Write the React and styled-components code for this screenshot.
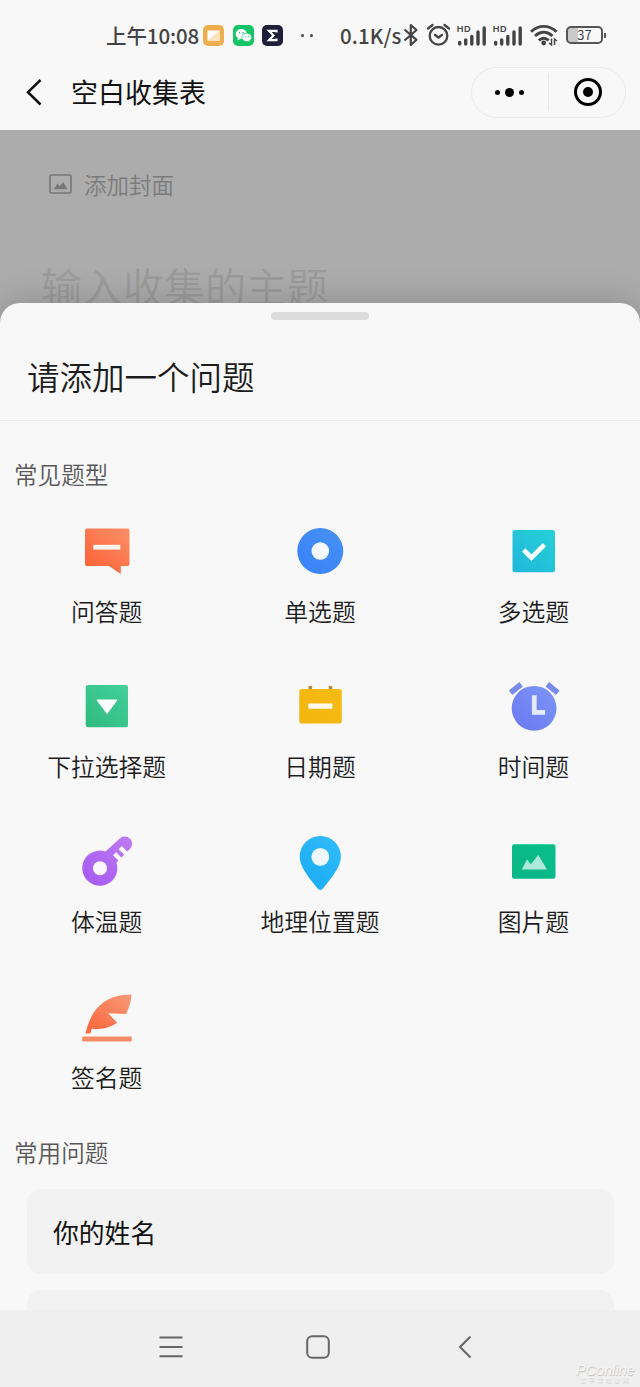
import React from "react";
import styled, { createGlobalStyle } from "styled-components";

const GlobalStyle = createGlobalStyle`
  * {
    box-sizing: border-box;
  }
  body {
    margin: 0;
    background: #f8f8f8;
    font-family: "Noto Sans CJK SC", "Noto Sans", sans-serif;
  }
  svg {
    display: block;
    overflow: visible;
    flex: none;
  }
`;

const QuestionIcon = ({ children, from, to, id }) => (
  <svg width="56" height="56" viewBox="0 0 56 56">
    <defs>
      <linearGradient id={id} x1="1" y1="0" x2="0.2" y2="1">
        <stop offset="0" stopColor={from} />
        <stop offset="1" stopColor={to} />
      </linearGradient>
    </defs>
    {children}
  </svg>
);

const TextIcon = () => (
  <QuestionIcon id="text" from="#fb9068" to="#fb6236">
    <path
      d="M8 5.500H48.500a2 2 0 0 1 2 2V41a2 2 0 0 1-2 2H41.800V51L30 43H8a2 2 0 0 1-2-2V7.500a2 2 0 0 1 2-2Z"
      fill="url(#text)"
    />
    <rect x="14.300" y="21.800" width="27" height="4.800" fill="#fff5f0" />
  </QuestionIcon>
);

const RadioIcon = () => (
  <QuestionIcon id="radio" from="#4692f0" to="#3a82fb">
    <circle cx="28.300" cy="28" r="23" fill="url(#radio)" />
    <circle cx="28.300" cy="28" r="8.800" fill="#f4f8ff" />
  </QuestionIcon>
);

const CheckIcon = () => (
  <QuestionIcon id="check" from="#25d0d8" to="#22b9da">
    <rect x="7.500" y="7" width="42.500" height="42.200" rx="2.500" fill="url(#check)" />
    <path d="M18.700 27l7.700 7.700L39.500 21.600" fill="none" stroke="#f4ffff" strokeWidth="4.600" />
  </QuestionIcon>
);

const SelectIcon = () => (
  <QuestionIcon id="select" from="#43cf9b" to="#31bd80">
    <rect x="6.700" y="7" width="42.300" height="42.200" rx="2.500" fill="url(#select)" />
    <path
      d="M18 22H38L28 35.500Z"
      fill="#fff"
      stroke="#fff"
      strokeWidth="1"
      strokeLinejoin="round"
    />
  </QuestionIcon>
);

const DateIcon = () => (
  <QuestionIcon id="date" from="#f5bc16" to="#f3b50c">
    <path d="M18.300 8v4M38.500 8v4" stroke="#bb8a41" strokeWidth="3.600" />
    <rect x="7.300" y="11" width="42.500" height="34.500" rx="2.500" fill="url(#date)" />
    <rect x="16.300" y="25.600" width="24" height="5.200" rx="0.800" fill="#fffbea" />
  </QuestionIcon>
);

const TimeIcon = () => (
  <QuestionIcon id="time" from="#7c97f8" to="#6d7af2">
    <path d="M5.600 14.800l10.500-8.500M52.800 14.800l-10.500-8.500" stroke="#7a8ceb" strokeWidth="5.600" />
    <circle cx="29.100" cy="30.300" r="22.400" fill="url(#time)" />
    <path d="M29.300 17.300V34.300H40.100" fill="none" stroke="#e6ecff" strokeWidth="4.700" />
  </QuestionIcon>
);

const TemperatureIcon = () => (
  <QuestionIcon id="temperature" from="#bd7cf0" to="#a75cf2">
    <path
      d="M40.500 5.800A7.300 7.300 0 1 1 50.600 16.300L37.500 29.500A17.600 17.600 0 1 1 26.500 18.500Z"
      fill="url(#temperature)"
    />
    <circle cx="21" cy="35.300" r="7" fill="#fbf5ff" />
    <path d="M35.600 20.700l8.500 8.500M41.200 14.600l8 8" stroke="#faf6fd" strokeWidth="4.400" />
  </QuestionIcon>
);

const LocationIcon = () => (
  <QuestionIcon id="location" from="#31bdfb" to="#1cabf3">
    <path
      d="M28.300 3A20.600 20.600 0 0 1 48.900 23.600C48.900 35 38 46.500 31 55.600Q28.300 58.400 25.600 55.600C18.600 46.500 7.700 35 7.700 23.600A20.600 20.600 0 0 1 28.300 3Z"
      fill="url(#location)"
    />
    <circle cx="28.300" cy="23.900" r="8.900" fill="#eef8fe" />
  </QuestionIcon>
);

const PictureIcon = () => (
  <QuestionIcon id="picture" from="#0abf8b" to="#0ab685">
    <rect x="7" y="11.200" width="43.500" height="34.600" rx="2.500" fill="url(#picture)" />
    <path d="M16.700 36.500L22.100 26.500L25.700 31.500L33.300 22L42 36.500Z" fill="#aeeadb" />
  </QuestionIcon>
);

const SignIcon = () => (
  <QuestionIcon id="sign" from="#f79a78" to="#fb683c">
    <path
      d="M52.600 5.400C51.800 13 50 19 47 25L29.200 24.300L38.200 33.700C31 38.500 22 41 12.800 39.800L11.300 44.500H6.600C9 33 13.500 24.500 18 19.300C26.500 9.500 38 5.500 52.600 5.400Z"
      fill="url(#sign)"
    />
    <rect x="3.200" y="47.600" width="49.500" height="4.800" rx="0.800" fill="#f88b66" />
  </QuestionIcon>
);

const Signal = () => (
  <svg width="31" height="24" viewBox="0 0 31 24">
    <text x="-0.500" y="8.500" fontSize="9.500" fontWeight="600" fill="#444" fontFamily="Noto Sans">
      HD
    </text>
    <path
      d="M2.700 21v-1.500M8.700 21v-4M14.800 21v-7.500M21 21v-12M27.200 21v-16"
      stroke="#444"
      strokeWidth="3.400"
      strokeLinecap="round"
    />
  </svg>
);

const questionTypes = [
  { name: "问答题", Icon: TextIcon },
  { name: "单选题", Icon: RadioIcon },
  { name: "多选题", Icon: CheckIcon },
  { name: "下拉选择题", Icon: SelectIcon },
  { name: "日期题", Icon: DateIcon },
  { name: "时间题", Icon: TimeIcon },
  { name: "体温题", Icon: TemperatureIcon },
  { name: "地理位置题", Icon: LocationIcon },
  { name: "图片题", Icon: PictureIcon },
  { name: "签名题", Icon: SignIcon },
];

const StatusBar = () => (
  <StyledStatusBar>
    <StatusText $width={97}>上午10:08</StatusText>
    <AppIcons>
      <svg width="21" height="21" viewBox="0 0 21 21">
        <rect width="21" height="21" rx="5" fill="#efae4e" />
        <path d="M4.500 5.500h12.500L4.500 16Z" fill="#fff" />
        <path d="M17 5.500V16H4.500Z" fill="#fbe3bd" />
      </svg>
      <svg width="21" height="21" viewBox="0 0 21 21">
        <rect width="21" height="21" rx="5" fill="#18c468" />
        <path d="M5 13l-.6 2.500L7.500 14ZM15 15l2 1.700-.5-3Z" fill="#fff" />
        <ellipse cx="8.300" cy="9" rx="5.600" ry="4.900" fill="#fff" />
        <ellipse cx="13.700" cy="12.400" rx="4.900" ry="4.200" fill="#fff" stroke="#18c468" strokeWidth="0.700" />
        <g fill="#18c468">
          <circle cx="6.500" cy="7.800" r="0.800" />
          <circle cx="10.300" cy="7.800" r="0.800" />
          <circle cx="12.200" cy="11.300" r="0.650" />
          <circle cx="15.400" cy="11.300" r="0.650" />
        </g>
      </svg>
      <svg width="21" height="21" viewBox="0 0 21 21">
        <rect width="21" height="21" rx="5" fill="#1d2038" />
        <path
          d="M14.500 7.500V5.800H7L11.500 10.500L7 15.200H14.500V13.500"
          fill="none"
          stroke="#fff"
          strokeWidth="2.200"
        />
      </svg>
    </AppIcons>
    <MoreDots>
      <i />
      <i />
    </MoreDots>
    <StatusText $width={63} $spacing="0.1px">
      0.1K/s
    </StatusText>
    <StatusIcons>
      <svg width="16" height="24" viewBox="0 0 16 24">
        <path
          d="M1.500 6.500L13.500 16.800L7.800 22V2L13.500 7L1.500 17.500"
          fill="none"
          stroke="#444"
          strokeWidth="2.200"
          strokeLinejoin="round"
        />
      </svg>
      <svg width="24" height="24" viewBox="0 0 24 24">
        <g fill="none" stroke="#444" strokeWidth="2.300" strokeLinecap="round">
          <circle cx="12.500" cy="12.800" r="8.800" />
          <path d="M2 5.500L6.500 2M23 5.500L18.500 2M9 12l3.500 2.500 3.500-2.500" />
        </g>
      </svg>
      <Signal />
      <Signal />
      <svg width="28" height="24" viewBox="0 0 28 24">
        <g fill="none" stroke="#444" strokeWidth="2.900">
          <path d="M0 8.800C7.500 1.500 18 1.500 25.500 8.800" />
          <path d="M4 13C9.500 7.900 16 7.900 21.500 13" />
          <path d="M7.800 17.300C11 14.500 14.500 14.500 17.700 17.300" />
        </g>
        <circle cx="12.700" cy="20" r="2.400" fill="#444" />
        <path d="M20.500 15.500v6.500l-2.500-2M23.500 22v-6l2.500 2" fill="none" stroke="#444" strokeWidth="1.500" />
      </svg>
    </StatusIcons>
    <Battery>37</Battery>
    <BatteryTip />
  </StyledStatusBar>
);

export default function App() {
  return (
    <Phone>
      <GlobalStyle />
      <StatusBar />
      <NavBar>
        <svg width="16" height="28" viewBox="0 0 16 28">
          <path d="M14.500 2L2 14.200L14.500 26.500" fill="none" stroke="#111" strokeWidth="2.500" />
        </svg>
        <NavTitle>空白收集表</NavTitle>
        <Capsule>
          <CapsuleDots>
            <i />
            <i />
            <i />
          </CapsuleDots>
          <CapsuleClose>
            <i />
          </CapsuleClose>
        </Capsule>
      </NavBar>
      <Content>
        <Backdrop>
          <Cover>
            <svg width="23" height="20" viewBox="0 0 23 20">
              <rect x="1" y="1" width="21" height="18" rx="1" fill="none" stroke="#777" strokeWidth="1.600" />
              <path d="M5 15.300L8.500 9.500L10.700 12.500L14 8L18.500 15.300Z" fill="#777" />
            </svg>
            添加封面
          </Cover>
          <FormTitle>输入收集的主题</FormTitle>
        </Backdrop>
        <Sheet>
          <Handle />
          <SheetTitle>请添加一个问题</SheetTitle>
          <SectionTitle>常见题型</SectionTitle>
          <TypeGrid>
            {questionTypes.map(({ name, Icon }) => (
              <TypeItem key={name}>
                <Icon />
                <span>{name}</span>
              </TypeItem>
            ))}
          </TypeGrid>
          <SectionTitle $compact>常用问题</SectionTitle>
          <QuestionCard>你的姓名</QuestionCard>
          <QuestionCard />
        </Sheet>
      </Content>
      <SystemBar>
        <svg width="24" height="24" viewBox="0 0 24 24">
          <path d="M0.500 2.500h23M0.500 12h23M0.500 21.300h23" stroke="#666" strokeWidth="2" />
        </svg>
        <svg width="24" height="24" viewBox="0 0 24 24">
          <rect x="1.200" y="1.200" width="21.600" height="21.600" rx="5" fill="none" stroke="#666" strokeWidth="2" />
        </svg>
        <svg width="24" height="24" viewBox="0 0 24 24">
          <path d="M17.500 1.500L7 12L17.500 22.500" fill="none" stroke="#666" strokeWidth="2" />
        </svg>
        <Watermark>
          <b>PConline</b>
          <span>太平洋电脑网</span>
        </Watermark>
      </SystemBar>
    </Phone>
  );
}

const Phone = styled.div`
  width: 640px;
  height: 1387px;
  display: flex;
  flex-direction: column;
  overflow: hidden;
  color: #1c1c1c;
`;

const StyledStatusBar = styled.div`
  height: 54px;
  padding: 16px 0 0 106px;
  display: flex;
  align-items: center;
  flex: none;
  color: #444;
`;

const StatusText = styled.span`
  width: ${(props) => props.$width}px;
  font-size: 20.5px;
  line-height: 24px;
  letter-spacing: ${(props) => props.$spacing || "-0.1px"};
  font-weight: 500;
  white-space: nowrap;
`;

const AppIcons = styled.div`
  display: flex;
  gap: 8.500px;
`;

const MoreDots = styled.div`
  display: flex;
  gap: 6px;
  margin: 0 27px 0 18px;
  i {
    width: 3px;
    height: 3px;
    border-radius: 50%;
    background: #444;
  }
`;

const StatusIcons = styled.div`
  display: flex;
  margin-right: 7px;
  gap: 5px;
  svg:nth-child(2) {
    margin: 0 2px;
  }
  svg:nth-child(5) {
    margin-left: 2px;
  }
`;

const Battery = styled.div`
  width: 37px;
  height: 18px;
  border: 2px solid #555;
  border-radius: 5px;
  background: linear-gradient(to right, #c9c9c9 30%, #f8f8f8 30%);
  font-size: 13px;
  line-height: 14px;
  text-align: center;
`;

const BatteryTip = styled.div`
  width: 2px;
  height: 5px;
  margin-left: 1px;
  background: #555;
`;

const NavBar = styled.div`
  height: 76px;
  padding: 0 14px 0 26px;
  display: flex;
  align-items: center;
  flex: none;
`;

const NavTitle = styled.div`
  margin-left: 29px;
  font-size: 27px;
  line-height: 40px;
  color: #111;
`;

const Capsule = styled.div`
  width: 155px;
  height: 51px;
  margin-left: auto;
  border: 1px solid #ebebeb;
  border-radius: 26px;
  display: flex;
  align-items: center;
`;

const CapsuleDots = styled.div`
  width: 77px;
  height: 36px;
  padding-right: 2px;
  border-right: 1px solid #e8e8e8;
  display: flex;
  align-items: center;
  justify-content: center;
  gap: 5px;
  i {
    width: 5px;
    height: 5px;
    border-radius: 50%;
    background: #000;
  }
  i:nth-child(2) {
    width: 9px;
    height: 9px;
  }
`;

const CapsuleClose = styled.div`
  width: 28px;
  height: 28px;
  margin: 0 23px 0 25px;
  border: 3.500px solid #000;
  border-radius: 50%;
  display: flex;
  align-items: center;
  justify-content: center;
  i {
    width: 10px;
    height: 10px;
    border-radius: 50%;
    background: #000;
  }
`;

const Content = styled.div`
  height: 1180px;
  flex: none;
  overflow: hidden;
  background: #acacac;
`;

const Backdrop = styled.div`
  height: 173px;
  padding: 38px 41px 0;
`;

const Cover = styled.div`
  height: 32px;
  padding-left: 8px;
  display: flex;
  align-items: center;
  gap: 12px;
  font-size: 22.500px;
  line-height: 32px;
  font-weight: 350;
  color: #7b7b7b;
`;

const FormTitle = styled.div`
  margin-top: 55px;
  font-size: 41px;
  line-height: 60px;
  font-weight: 350;
  color: #9b9b9b;
`;

const Sheet = styled.div`
  position: relative;
  height: 1007px;
  border-radius: 20px 20px 0 0;
  background: #f8f8f8;
  box-shadow: 0 0 36px rgba(0, 0, 0, 0.2);
  display: flex;
  flex-direction: column;
  overflow: hidden;
`;

const Handle = styled.div`
  width: 98px;
  height: 8px;
  margin: 9px auto 0;
  border-radius: 4px;
  background: #dcdcdc;
  flex: none;
`;

const SheetTitle = styled.div`
  height: 101px;
  padding: 32px 27px 0;
  border-bottom: 1px solid #ebebeb;
  font-size: 32.500px;
  line-height: 48px;
  font-weight: 350;
  flex: none;
`;

const SectionTitle = styled.div`
  padding-left: 14px;
  margin-top: ${(props) => (props.$compact ? 0 : 35)}px;
  font-size: 23.600px;
  line-height: 36px;
  font-weight: 350;
  color: #585858;
  flex: none;
`;

const TypeGrid = styled.div`
  display: grid;
  grid-template-columns: repeat(3, 1fr);
  grid-auto-rows: 155.200px;
  height: 642px;
  padding-top: 31px;
  flex: none;
`;

const TypeItem = styled.div`
  display: flex;
  flex-direction: column;
  align-items: center;
  gap: 14px;
  font-size: 23.800px;
  line-height: 36px;
  font-weight: 350;
`;

const QuestionCard = styled.div`
  height: 85px;
  margin: 19px 26px 0 27px;
  padding-left: 26px;
  border-radius: 14px;
  background: #f2f2f2;
  font-size: 25.800px;
  line-height: 85px;
  color: #111;
  flex: none;
  & + & {
    margin-top: 16px;
  }
`;

const SystemBar = styled.div`
  position: relative;
  height: 77px;
  padding: 0 163px 4px 159px;
  display: flex;
  align-items: center;
  justify-content: space-between;
  flex: none;
  background: #efefef;
`;

const Watermark = styled.div`
  position: absolute;
  right: 4px;
  bottom: 3px;
  width: 61px;
  display: flex;
  flex-direction: column;
  align-items: center;
  color: #f6f6f6;
  text-shadow: 0.5px 0.5px 1px #bbb;
  b {
    font: italic 400 14.500px/14px "Liberation Sans", sans-serif;
  }
  span {
    font-size: 5.500px;
    line-height: 7px;
    letter-spacing: 3px;
    white-space: nowrap;
  }
`;
